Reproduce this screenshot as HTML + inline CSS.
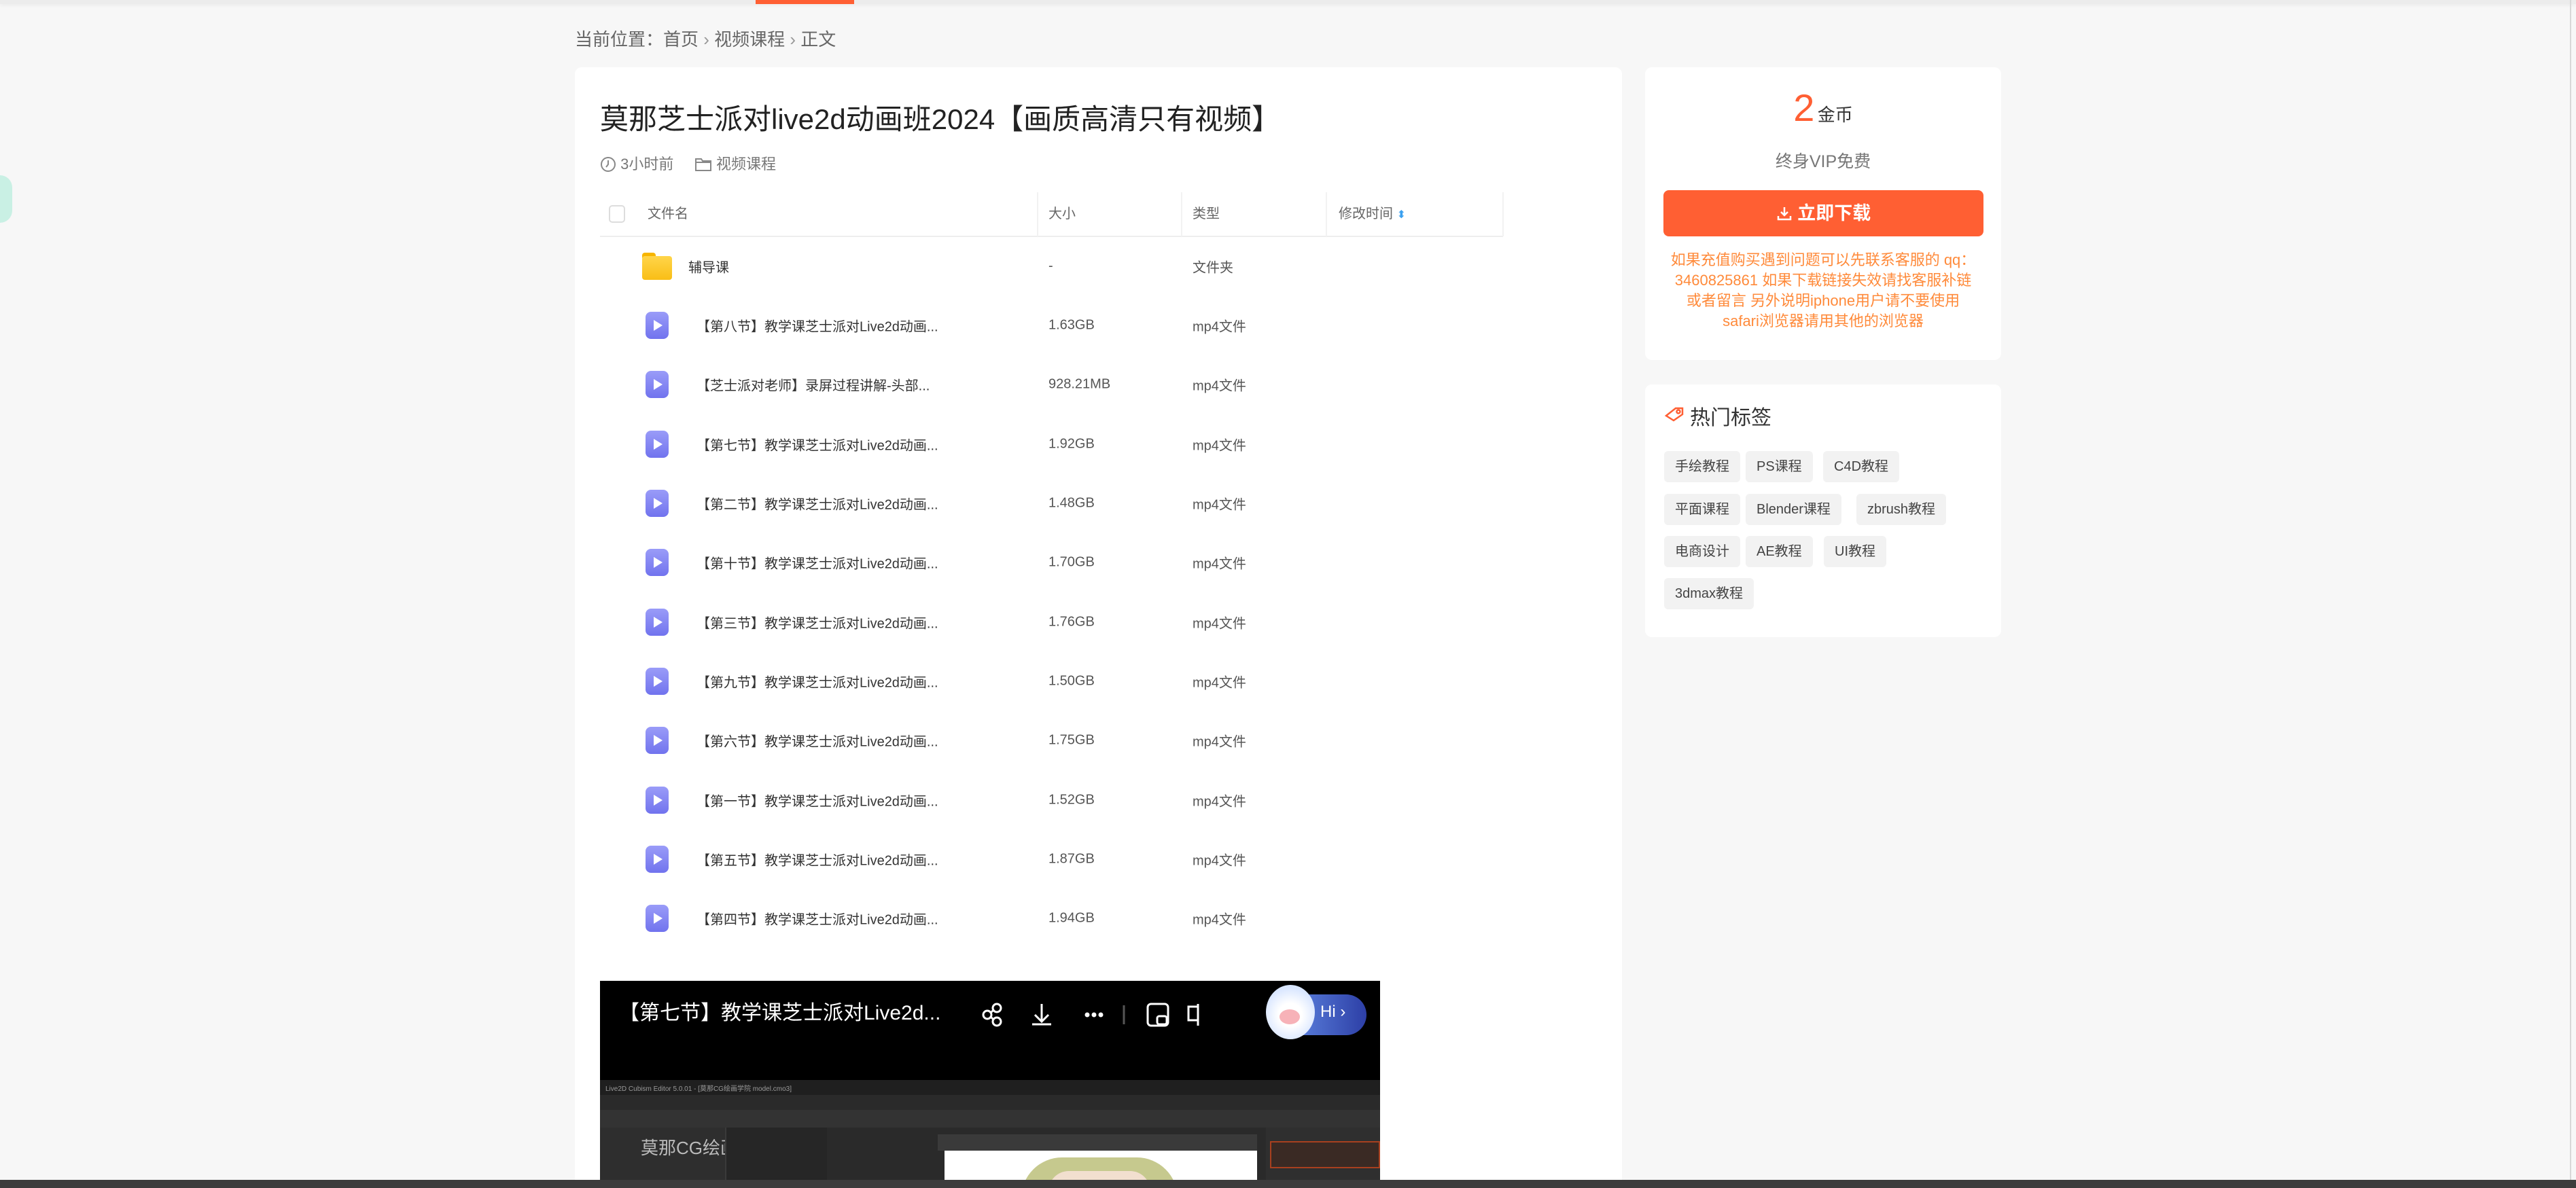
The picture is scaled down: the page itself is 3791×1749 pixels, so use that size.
<!DOCTYPE html>
<html><head><meta charset="utf-8">
<style>
*{margin:0;padding:0;box-sizing:border-box}
html,body{width:3791px;height:1749px;overflow:hidden;background:#f7f7f7;font-family:"Liberation Sans","Noto Sans CJK SC",sans-serif;position:relative}
.a{position:absolute}
.top{left:0;top:0;width:3791px;height:6px;background:#ececec;box-shadow:0 2px 6px rgba(0,0,0,.05)}
.card{background:#fff;border-radius:10px}
.row{position:absolute;left:883px;width:1329px;height:87px;font-size:20px;color:#333}
.row span{position:absolute;top:50%;transform:translateY(-50%);white-space:nowrap}
.play{position:absolute;left:950px;width:34px;height:40px;border-radius:8px;background:linear-gradient(#9a9cf8,#7173ee)}
.play:after{content:"";position:absolute;left:12px;top:12px;border-left:13px solid #fff;border-top:8px solid transparent;border-bottom:8px solid transparent}
.tag{position:absolute;height:46px;line-height:46px;padding:0 16px;background:#f2f2f2;border-radius:6px;font-size:20px;color:#444;white-space:nowrap}
.hd{position:absolute;top:283px;height:65px;line-height:65px;font-size:20px;color:#666}
.vl{position:absolute;top:283px;width:2px;height:65px;background:#f2f2f2}
</style></head><body>
<div class="a top"></div>
<div class="a" style="left:1112px;top:0;width:145px;height:6px;background:#ff5f33"></div>
<div class="a" style="left:0;top:258px;width:18px;height:70px;border-radius:0 35px 35px 0;background:#c9f0e4"></div>
<div class="a" style="left:3782px;top:0;width:2px;height:1749px;background:#d8d8d8"></div>

<div class="a" style="left:846px;top:38px;font-size:26px;color:#666;white-space:nowrap">当前位置：首页 <span style="color:#999">›</span> 视频课程 <span style="color:#999">›</span> 正文</div>

<div class="a card" style="left:846px;top:99px;width:1541px;height:1700px"></div>
<div class="a" style="left:883px;top:142px;font-size:42px;color:#222;white-space:nowrap">莫那芝士派对live2d动画班2024【画质高清只有视频】</div>
<div class="a" style="left:883px;top:224px;font-size:22px;color:#777;white-space:nowrap">
<svg width="24" height="24" viewBox="0 0 24 24" style="vertical-align:-5px"><circle cx="12" cy="12" r="10" fill="none" stroke="#888" stroke-width="2"/><path d="M12 6v6l-3 4" fill="none" stroke="#888" stroke-width="2"/></svg> 3小时前 &nbsp;&nbsp;&nbsp;
<svg width="26" height="22" viewBox="0 0 26 22" style="vertical-align:-4px"><path d="M2 3h8l2 3h12v14H2z" fill="none" stroke="#888" stroke-width="2"/><path d="M2 8h22" stroke="#888" stroke-width="2"/></svg> 视频课程</div>

<div class="a" style="left:883px;top:347px;width:1329px;height:2px;background:#eee"></div>
<div class="a" style="left:896px;top:302px;width:24px;height:26px;border:2px solid #ddd;border-radius:5px"></div>
<div class="hd" style="left:953px">文件名</div>
<div class="hd" style="left:1543px">大小</div>
<div class="hd" style="left:1755px">类型</div>
<div class="hd" style="left:1970px">修改时间 <span style="color:#3aa0f0;font-size:16px">⬍</span></div>
<div class="vl" style="left:1526px"></div><div class="vl" style="left:1738px"></div><div class="vl" style="left:1951px"></div><div class="vl" style="left:2211px"></div>

<div class="row" style="top:348px">
<div class="a" style="left:62px;top:24px;width:44px;height:40px"><div class="a" style="left:0;top:0;width:20px;height:8px;background:#f7b500;border-radius:4px 4px 0 0"></div><div class="a" style="left:0;top:5px;width:44px;height:35px;background:linear-gradient(#ffd54a,#f9be16);border-radius:4px"></div></div>
<span style="left:130px">辅导课</span><span style="left:660px;color:#555">-</span><span style="left:872px;color:#555">文件夹</span></div>

<div class="row" style="top:435px"><div class="play" style="left:67px;top:24px"></div><span style="left:142px">【第八节】教学课芝士派对Live2d动画...</span><span style="left:660px;color:#555">1.63GB</span><span style="left:872px;color:#555">mp4文件</span></div>
<div class="row" style="top:522px"><div class="play" style="left:67px;top:24px"></div><span style="left:142px">【芝士派对老师】录屏过程讲解-头部...</span><span style="left:660px;color:#555">928.21MB</span><span style="left:872px;color:#555">mp4文件</span></div>
<div class="row" style="top:610px"><div class="play" style="left:67px;top:24px"></div><span style="left:142px">【第七节】教学课芝士派对Live2d动画...</span><span style="left:660px;color:#555">1.92GB</span><span style="left:872px;color:#555">mp4文件</span></div>
<div class="row" style="top:697px"><div class="play" style="left:67px;top:24px"></div><span style="left:142px">【第二节】教学课芝士派对Live2d动画...</span><span style="left:660px;color:#555">1.48GB</span><span style="left:872px;color:#555">mp4文件</span></div>
<div class="row" style="top:784px"><div class="play" style="left:67px;top:24px"></div><span style="left:142px">【第十节】教学课芝士派对Live2d动画...</span><span style="left:660px;color:#555">1.70GB</span><span style="left:872px;color:#555">mp4文件</span></div>
<div class="row" style="top:872px"><div class="play" style="left:67px;top:24px"></div><span style="left:142px">【第三节】教学课芝士派对Live2d动画...</span><span style="left:660px;color:#555">1.76GB</span><span style="left:872px;color:#555">mp4文件</span></div>
<div class="row" style="top:959px"><div class="play" style="left:67px;top:24px"></div><span style="left:142px">【第九节】教学课芝士派对Live2d动画...</span><span style="left:660px;color:#555">1.50GB</span><span style="left:872px;color:#555">mp4文件</span></div>
<div class="row" style="top:1046px"><div class="play" style="left:67px;top:24px"></div><span style="left:142px">【第六节】教学课芝士派对Live2d动画...</span><span style="left:660px;color:#555">1.75GB</span><span style="left:872px;color:#555">mp4文件</span></div>
<div class="row" style="top:1134px"><div class="play" style="left:67px;top:24px"></div><span style="left:142px">【第一节】教学课芝士派对Live2d动画...</span><span style="left:660px;color:#555">1.52GB</span><span style="left:872px;color:#555">mp4文件</span></div>
<div class="row" style="top:1221px"><div class="play" style="left:67px;top:24px"></div><span style="left:142px">【第五节】教学课芝士派对Live2d动画...</span><span style="left:660px;color:#555">1.87GB</span><span style="left:872px;color:#555">mp4文件</span></div>
<div class="row" style="top:1308px"><div class="play" style="left:67px;top:24px"></div><span style="left:142px">【第四节】教学课芝士派对Live2d动画...</span><span style="left:660px;color:#555">1.94GB</span><span style="left:872px;color:#555">mp4文件</span></div>

<div class="a" style="left:883px;top:1444px;width:1148px;height:305px;background:#000;overflow:hidden">
<div class="a" style="left:28px;top:22px;font-size:30px;color:#fff;white-space:nowrap">【第七节】教学课芝士派对Live2d...</div>
<svg class="a" style="left:550px;top:20px" width="500" height="60" viewBox="0 0 500 60" fill="none" stroke="#fff" stroke-width="3">
<circle cx="20" cy="30" r="6"/><circle cx="34" cy="20" r="6"/><circle cx="34" cy="40" r="6"/><path d="M25 27l4-4M25 33l4 4"/>
<path d="M100 14v26M90 30l10 10 10-10M86 44h28"/>
<circle cx="167" cy="30" r="2" fill="#fff"/><circle cx="177" cy="30" r="2" fill="#fff"/><circle cx="187" cy="30" r="2" fill="#fff"/>
<path d="M221 16v28" stroke="#555"/>
<rect x="256" y="14" width="30" height="32" rx="5"/><rect x="270" y="32" width="14" height="12" rx="3"/>
<path d="M330 14v32M330 18h-14v20h14"/>
</svg>
<div class="a" style="left:986px;top:20px;width:142px;height:60px;border-radius:30px;background:linear-gradient(90deg,#6a96ef,#2d3fa6)"></div>
<div class="a" style="left:980px;top:6px;width:72px;height:80px;border-radius:50%;background:radial-gradient(circle at 50% 55%,#fff 30%,#d9e6ff 70%)"></div>
<div class="a" style="left:1000px;top:42px;width:30px;height:22px;border-radius:50%;background:#f7b2b8"></div>
<div class="a" style="left:1060px;top:32px;font-size:24px;color:#fff">Hi ›</div>
<div class="a" style="left:0;top:146px;width:1148px;height:170px;background:#2a2a2a"></div>
<div class="a" style="left:0;top:146px;width:1148px;height:22px;background:#1f1f1f"></div>
<div class="a" style="left:8px;top:150px;font-size:10px;color:#999;white-space:nowrap">Live2D Cubism Editor 5.0.01 - [莫那CG绘画学院 model.cmo3]</div>
<div class="a" style="left:0;top:190px;width:1148px;height:26px;background:#333"></div>
<div class="a" style="left:0;top:216px;width:184px;height:100px;background:#2e2e2e"></div>
<div class="a" style="left:60px;top:226px;font-size:26px;color:#bbb;white-space:nowrap">莫那CG绘画学院</div>
<div class="a" style="left:184px;top:216px;width:150px;height:100px;background:#262626;border-left:2px solid #3a3a3a"></div>
<div class="a" style="left:497px;top:226px;width:470px;height:24px;background:#3a3a3a"></div>
<div class="a" style="left:507px;top:250px;width:460px;height:70px;background:#fff"></div>
<div class="a" style="left:620px;top:260px;width:230px;height:60px;border-radius:60px 60px 0 0;background:#c6c98e"></div>
<div class="a" style="left:660px;top:280px;width:150px;height:40px;background:#f2dfcf;border-radius:30px 30px 0 0"></div>
<div class="a" style="left:980px;top:216px;width:168px;height:100px;background:#2f2f2f"></div>
<div class="a" style="left:986px;top:236px;width:162px;height:40px;border:2px solid #a8401f;background:#3a2a24"></div>
</div>

<div class="a card" style="left:2421px;top:99px;width:524px;height:431px"></div>
<div class="a" style="left:2421px;top:126px;width:524px;text-align:center;white-space:nowrap"><span style="font-size:56px;color:#ff5f33">2</span> <span style="font-size:26px;color:#333">金币</span></div>
<div class="a" style="left:2421px;top:218px;width:524px;text-align:center;font-size:25px;color:#777">终身VIP免费</div>
<div class="a" style="left:2448px;top:280px;width:471px;height:68px;border-radius:8px;background:#ff5f33;color:#fff;font-size:27px;text-align:center;line-height:68px;font-weight:bold">
<svg width="24" height="24" viewBox="0 0 24 24" style="vertical-align:-3px" fill="none" stroke="#fff" stroke-width="2.5"><path d="M12 3v12M7 10l5 5 5-5M3 16v5h18v-5"/></svg> 立即下载</div>
<div class="a" style="left:2421px;top:368px;width:524px;text-align:center;font-size:22px;line-height:30px;color:#ff8a3a;white-space:nowrap">如果充值购买遇到问题可以先联系客服的 qq：<br>3460825861 如果下载链接失效请找客服补链<br>或者留言 另外说明iphone用户请不要使用<br>safari浏览器请用其他的浏览器</div>

<div class="a card" style="left:2421px;top:566px;width:524px;height:372px"></div>
<svg class="a" style="left:2449px;top:597px" width="30" height="24" viewBox="0 0 30 24" fill="none" stroke="#ff5f33" stroke-width="2.5"><path d="M3 15L17 4h10v9L14 22z"/><circle cx="21" cy="9" r="2.5"/></svg>
<div class="a" style="left:2487px;top:590px;font-size:30px;color:#333">热门标签</div>
<div class="tag" style="left:2449px;top:664px">手绘教程</div>
<div class="tag" style="left:2569px;top:664px">PS课程</div>
<div class="tag" style="left:2683px;top:664px">C4D教程</div>
<div class="tag" style="left:2449px;top:727px">平面课程</div>
<div class="tag" style="left:2569px;top:727px">Blender课程</div>
<div class="tag" style="left:2732px;top:727px">zbrush教程</div>
<div class="tag" style="left:2449px;top:789px">电商设计</div>
<div class="tag" style="left:2569px;top:789px">AE教程</div>
<div class="tag" style="left:2684px;top:789px">UI教程</div>
<div class="tag" style="left:2449px;top:851px">3dmax教程</div>

<div class="a" style="left:0;top:1737px;width:3791px;height:12px;background:#3c3c3c"></div>
</body></html>
